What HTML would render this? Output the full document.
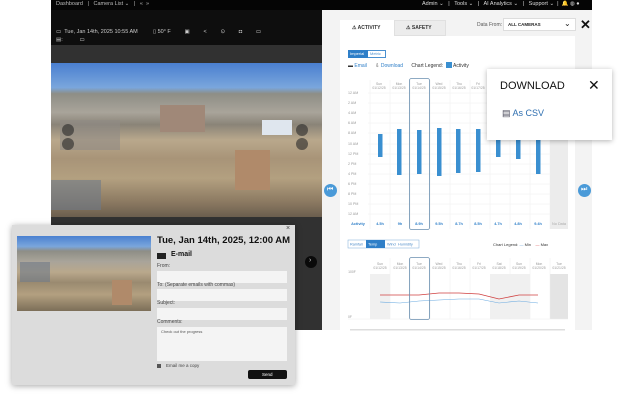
<!DOCTYPE html>
<html><head><meta charset="utf-8"><style>
*{margin:0;padding:0;box-sizing:border-box}
body{width:640px;height:410px;background:#fff;position:relative;overflow:hidden;font-family:"Liberation Sans",sans-serif}
.a{position:absolute}
.t{position:absolute;white-space:nowrap}
</style></head><body>
<!-- top nav -->
<div class="a" style="left:51px;top:0;width:541px;height:10px;background:#050505"></div>
<div class="t" style="left:56px;top:1px;font-size:5.5px;color:#bbb">Dashboard &nbsp;&nbsp;|&nbsp;&nbsp; Camera List ⌄ &nbsp;&nbsp;|&nbsp;&nbsp; « &nbsp;»</div>
<div class="t" style="left:422px;top:1px;font-size:5.5px;color:#ddd">Admin ⌄ &nbsp;&nbsp;|&nbsp;&nbsp; Tools ⌄ &nbsp;&nbsp;|&nbsp;&nbsp; AI Analytics ⌄ &nbsp;&nbsp;|&nbsp;&nbsp; Support ⌄ &nbsp;|&nbsp; 🔔 ◍ ●</div>
<!-- left panel -->
<div class="a" style="left:51px;top:10px;width:271px;height:320px;background:#313131"></div>
<div class="a" style="left:51px;top:10px;width:271px;height:35px;background:#0e0e0e"></div>
<div class="t" style="left:56px;top:29px;font-size:5.5px;color:#ccc">▭ &nbsp;Tue, Jan 14th, 2025 10:55 AM &nbsp;&nbsp;&nbsp;&nbsp;&nbsp;&nbsp;&nbsp;&nbsp; ▯ 50° F &nbsp;&nbsp;&nbsp;&nbsp;&nbsp;&nbsp;&nbsp; ▣ &nbsp;&nbsp;&nbsp;&nbsp;&nbsp;&nbsp;&nbsp; &lt; &nbsp;&nbsp;&nbsp;&nbsp;&nbsp;&nbsp;&nbsp; ⊙ &nbsp;&nbsp;&nbsp;&nbsp;&nbsp;&nbsp;&nbsp; ◘ &nbsp;&nbsp;&nbsp;&nbsp;&nbsp;&nbsp;&nbsp; ▭</div>
<div class="t" style="left:56px;top:37px;font-size:5.5px;color:#ccc">▤: &nbsp;&nbsp;&nbsp;&nbsp;&nbsp;&nbsp;&nbsp;&nbsp;&nbsp; ▭</div>
<!-- photo -->
<div class="a" style="left:51px;top:63px;width:271px;height:154px;background:linear-gradient(#4a7fd0 0%,#7aa6dc 16%,#8e8e86 20%,#a9a49a 32%,#8a8478 40%,#b9a88c 50%,#a89478 62%,#b3a080 75%,#8c7a62 90%,#6b5e4e 100%)"></div>
<div class="a" style="left:60px;top:120px;width:60px;height:30px;background:#8f8b86;opacity:.6"></div>
<div class="a" style="left:160px;top:105px;width:45px;height:27px;background:#a08878"></div>
<div class="a" style="left:235px;top:150px;width:35px;height:40px;background:#b08a6a"></div>
<div class="a" style="left:262px;top:120px;width:30px;height:15px;background:#dfe6ee"></div>
<div class="a" style="left:51px;top:180px;width:50px;height:30px;background:#6e7a88;opacity:.6"></div>
<div class="a" style="left:62px;top:124px;width:12px;height:12px;border-radius:50%;background:rgba(40,40,40,.6)"></div>
<div class="a" style="left:62px;top:138px;width:12px;height:12px;border-radius:50%;background:rgba(40,40,40,.6)"></div>
<div class="a" style="left:296px;top:124px;width:12px;height:12px;border-radius:50%;background:rgba(40,40,40,.6)"></div>
<div class="a" style="left:296px;top:138px;width:12px;height:12px;border-radius:50%;background:rgba(40,40,40,.6)"></div>
<div class="a" style="left:305px;top:256px;width:12px;height:12px;border-radius:50%;background:#0a0a0a"></div>
<div class="t" style="left:309px;top:257px;font-size:7px;color:#ccc">›</div>
<!-- right panel -->
<div class="a" style="left:322px;top:10px;width:270px;height:320px;background:#f3f3f3"></div>
<div class="a" style="left:340px;top:20px;width:54px;height:16px;background:#fff"></div>
<div class="a" style="left:394px;top:20px;width:52px;height:16px;background:#ececec;border:1px solid #e0e0e0"></div>
<div class="t" style="left:352px;top:25px;font-size:5px;color:#333;font-weight:bold">⚠ ACTIVITY</div>
<div class="t" style="left:406px;top:25px;font-size:5px;color:#333;font-weight:bold">⚠ SAFETY</div>
<div class="t" style="left:477px;top:22px;font-size:5px;color:#555">Data From:</div>
<div class="a" style="left:503px;top:18px;width:73px;height:13px;background:#fff;border:1px solid #ddd"></div>
<div class="t" style="left:508px;top:22px;font-size:4.5px;color:#222;font-weight:bold">ALL CAMERAS</div>
<div class="t" style="left:564px;top:19px;font-size:8px;color:#222">⌄</div>
<div class="t" style="left:580px;top:17px;font-size:13px;color:#111;font-weight:bold">✕</div>
<div class="a" style="left:340px;top:36px;width:235px;height:296px;background:#fff"></div>
<div class="a" style="left:348px;top:50px;width:38px;height:8px;border:1px solid #4a90d0;background:#fff"></div>
<div class="a" style="left:348px;top:50px;width:20px;height:8px;background:#2f7fc8"></div>
<div class="t" style="left:350px;top:51px;font-size:4px;color:#fff">Imperial</div>
<div class="t" style="left:370px;top:51px;font-size:4px;color:#4a90d0">Metric</div>
<div class="t" style="left:348px;top:62px;font-size:5px;color:#2f7fc8"><span style="color:#333">▬</span> Email &nbsp;&nbsp;&nbsp;&nbsp; <span style="color:#333">⇩</span> Download &nbsp;&nbsp;&nbsp;&nbsp; <span style="color:#333">Chart Legend: &nbsp;<span style="display:inline-block;width:6px;height:6px;background:#3a8fd0;vertical-align:-1px"></span> Activity</span></div>
<svg class="a" style="left:340px;top:76px" width="235" height="260" viewBox="340 76 235 260">
<g font-family="Liberation Sans" font-size="3.4" fill="#999" text-anchor="middle">
<text x="379" y="85">Sun</text><text x="379" y="89">01/12/25</text>
<text x="399" y="85">Mon</text><text x="399" y="89">01/13/25</text>
<text x="419" y="85">Tue</text><text x="419" y="89">01/14/25</text>
<text x="439" y="85">Wed</text><text x="439" y="89">01/15/25</text>
<text x="459" y="85">Thu</text><text x="459" y="89">01/16/25</text>
<text x="478" y="85">Fri</text><text x="478" y="89">01/17/25</text>
</g>
<rect x="550" y="92" width="18" height="137" fill="#ececec"/>
<g stroke="#eee" stroke-width=".5">
<line x1="368" y1="93" x2="568" y2="93"/><line x1="368" y1="103" x2="568" y2="103"/><line x1="368" y1="113" x2="568" y2="113"/><line x1="368" y1="123" x2="568" y2="123"/><line x1="368" y1="133" x2="568" y2="133"/><line x1="368" y1="144" x2="568" y2="144"/><line x1="368" y1="154" x2="568" y2="154"/><line x1="368" y1="164" x2="568" y2="164"/><line x1="368" y1="174" x2="568" y2="174"/><line x1="368" y1="184" x2="568" y2="184"/><line x1="368" y1="194" x2="568" y2="194"/><line x1="368" y1="204" x2="568" y2="204"/><line x1="368" y1="214" x2="568" y2="214"/>
<line x1="370" y1="80" x2="370" y2="229"/><line x1="390" y1="80" x2="390" y2="229"/><line x1="410" y1="80" x2="410" y2="229"/><line x1="430" y1="80" x2="430" y2="229"/><line x1="450" y1="80" x2="450" y2="229"/><line x1="470" y1="80" x2="470" y2="229"/><line x1="490" y1="80" x2="490" y2="229"/><line x1="510" y1="80" x2="510" y2="229"/><line x1="530" y1="80" x2="530" y2="229"/><line x1="550" y1="80" x2="550" y2="229"/>
</g>
<g font-family="Liberation Sans" font-size="3.6" fill="#999">
<text x="348" y="94">12 AM</text><text x="348" y="104">2 AM</text><text x="348" y="114">4 AM</text><text x="348" y="124">6 AM</text><text x="348" y="134">8 AM</text><text x="348" y="145">10 AM</text><text x="348" y="155">12 PM</text><text x="348" y="165">2 PM</text><text x="348" y="175">4 PM</text><text x="348" y="185">6 PM</text><text x="348" y="195">8 PM</text><text x="348" y="205">10 PM</text><text x="348" y="215">12 AM</text>
</g>
<g fill="#3a8fd0">
<rect x="378" y="134" width="4.5" height="23"/><rect x="397" y="129" width="4.5" height="46"/><rect x="417" y="130" width="4.5" height="44"/><rect x="437" y="128" width="4.5" height="48"/><rect x="456" y="129" width="4.5" height="44"/><rect x="476" y="129" width="4.5" height="43"/><rect x="496" y="140" width="4.5" height="17"/><rect x="516" y="140" width="4.5" height="19"/><rect x="536" y="140" width="4.5" height="34"/>
</g>
<g font-family="Liberation Sans" font-size="3.8" fill="#2f7fc8" font-weight="bold" text-anchor="middle">
<text x="358" y="225">Activity</text><text x="380" y="225">4.5h</text><text x="400" y="225">9h</text><text x="419" y="225">8.9h</text><text x="439" y="225">9.5h</text><text x="459" y="225">8.7h</text><text x="478" y="225">8.5h</text><text x="498" y="225">4.7h</text><text x="518" y="225">4.8h</text><text x="538" y="225">9.4h</text>
<text x="559" y="225" fill="#aaa" font-weight="normal">No Data</text></g>
<rect x="409.5" y="78.5" width="20" height="151" rx="2" fill="none" stroke="#6a8fb0" stroke-width=".8"/>
<!-- temp chart -->
<rect x="348" y="240" width="71" height="8" fill="#fff" stroke="#7aaad8" stroke-width=".5"/>
<rect x="366" y="240" width="19" height="8" fill="#2f7fc8"/>
<g font-family="Liberation Sans" font-size="3.8" fill="#4a8ac8"><text x="350" y="245.5">Rainfall</text><text x="368" y="245.5" fill="#fff">Temp</text><text x="387" y="245.5">Wind</text><text x="398" y="245.5">Humidity</text></g>
<text x="493" y="246" font-family="Liberation Sans" font-size="4" fill="#333">Chart Legend: <tspan fill="#4a90d0">—</tspan> Min &#160;&#160;&#160;<tspan fill="#d03030">—</tspan> Max</text>
<rect x="370" y="274" width="20" height="45" fill="#f0f0f0"/><rect x="490" y="274" width="40" height="45" fill="#f0f0f0"/><rect x="550" y="274" width="18" height="45" fill="#e4e4e4"/>
<g stroke="#eee" stroke-width=".5"><line x1="390" y1="258" x2="390" y2="319"/><line x1="410" y1="258" x2="410" y2="319"/><line x1="430" y1="258" x2="430" y2="319"/><line x1="450" y1="258" x2="450" y2="319"/><line x1="470" y1="258" x2="470" y2="319"/><line x1="510" y1="258" x2="510" y2="319"/><line x1="530" y1="258" x2="530" y2="319"/><line x1="550" y1="258" x2="550" y2="319"/><line x1="348" y1="319" x2="568" y2="319"/></g>
<g font-family="Liberation Sans" font-size="3.4" fill="#999" text-anchor="middle">
<text x="380" y="265">Sun</text><text x="380" y="269">01/12/25</text><text x="400" y="265">Mon</text><text x="400" y="269">01/13/25</text><text x="419" y="265">Tue</text><text x="419" y="269">01/14/25</text><text x="439" y="265">Wed</text><text x="439" y="269">01/15/25</text><text x="459" y="265">Thu</text><text x="459" y="269">01/16/25</text><text x="479" y="265">Fri</text><text x="479" y="269">01/17/25</text><text x="499" y="265">Sat</text><text x="499" y="269">01/18/25</text><text x="519" y="265">Sun</text><text x="519" y="269">01/19/25</text><text x="539" y="265">Mon</text><text x="539" y="269">01/20/25</text><text x="559" y="265">Tue</text><text x="559" y="269">01/21/25</text>
<text x="352" y="273">100F</text><text x="350" y="318">0F</text></g>
<polyline points="380,295 400,295 419,295 439,293 459,293 479,294 499,299 519,295 538,295" fill="none" stroke="#d04040" stroke-width=".8"/>
<polyline points="380,302 400,303 419,301 439,300 459,299 479,299 499,303 519,301 538,303" fill="none" stroke="#6aaae0" stroke-width=".6"/>
<rect x="409.5" y="257.5" width="20" height="62" rx="2" fill="none" stroke="#6a8fb0" stroke-width=".8"/>
<rect x="350" y="329" width="215" height="1.5" fill="#ddd"/>
</svg>
<div class="a" style="left:324px;top:184px;width:13px;height:13px;border-radius:50%;background:#4a9ad8"></div>
<div class="t" style="left:327px;top:186px;font-size:7px;color:#fff">⏮</div>
<div class="a" style="left:578px;top:184px;width:13px;height:13px;border-radius:50%;background:#4a9ad8"></div>
<div class="t" style="left:581px;top:186px;font-size:7px;color:#fff">⏭</div>
<!-- download popup -->
<div class="a" style="left:487px;top:69px;width:125px;height:71px;background:#fff;box-shadow:0 1px 5px rgba(0,0,0,.3)"></div>
<div class="t" style="left:500px;top:80px;font-size:11px;color:#111">DOWNLOAD</div>
<div class="t" style="left:588px;top:77px;font-size:14px;color:#111">✕</div>
<div class="t" style="left:502px;top:108px;font-size:9px;color:#445">▤ <span style="color:#2f6fb0;font-size:9px">As CSV</span></div>
<!-- email modal -->
<div class="a" style="left:12px;top:225px;width:283px;height:160px;background:#dcdcdc;box-shadow:0 1px 6px rgba(0,0,0,.35)"></div>
<div class="t" style="left:286px;top:225px;font-size:7px;color:#444">×</div>
<div class="a" style="left:17px;top:236px;width:134px;height:75px;background:linear-gradient(#4a80d0 0%,#7aa6dc 14%,#8e8e86 20%,#a9a49a 34%,#b9a88c 48%,#9a8a70 62%,#b3a080 78%,#7c6e58 100%)"></div>
<div class="a" style="left:20px;top:262px;width:30px;height:20px;background:#6e7a88;opacity:.6"></div>
<div class="a" style="left:112px;top:280px;width:20px;height:25px;background:#b08a6a"></div>
<div class="t" style="left:157px;top:235px;font-size:9.5px;color:#111;font-weight:bold">Tue, Jan 14th, 2025, 12:00 AM</div>
<div class="a" style="left:157px;top:253px;width:9px;height:6px;background:#222"></div>
<div class="t" style="left:171px;top:251px;font-size:7px;color:#111;font-weight:bold">E-mail</div>
<div class="t" style="left:157px;top:263px;font-size:5px;color:#444">From:</div>
<div class="a" style="left:157px;top:271px;width:130px;height:12px;background:#f4f4f4"></div>
<div class="t" style="left:157px;top:282px;font-size:5px;color:#444">To: (Separate emails with commas)</div>
<div class="a" style="left:157px;top:289px;width:130px;height:12px;background:#f4f4f4"></div>
<div class="t" style="left:157px;top:300px;font-size:5px;color:#444">Subject:</div>
<div class="a" style="left:157px;top:308px;width:130px;height:12px;background:#f4f4f4"></div>
<div class="t" style="left:157px;top:319px;font-size:5px;color:#444">Comments:</div>
<div class="a" style="left:157px;top:327px;width:130px;height:34px;background:#f4f4f4"></div>
<div class="t" style="left:161px;top:329px;font-size:4px;color:#555">Check out the progress</div>
<div class="a" style="left:157px;top:364px;width:4px;height:4px;background:#555"></div>
<div class="t" style="left:166px;top:363px;font-size:4.5px;color:#444">Email me a copy</div>
<div class="a" style="left:248px;top:370px;width:39px;height:9px;background:#111;border-radius:2px"></div>
<div class="t" style="left:262px;top:372px;font-size:4.5px;color:#fff">Send</div>
</body></html>
